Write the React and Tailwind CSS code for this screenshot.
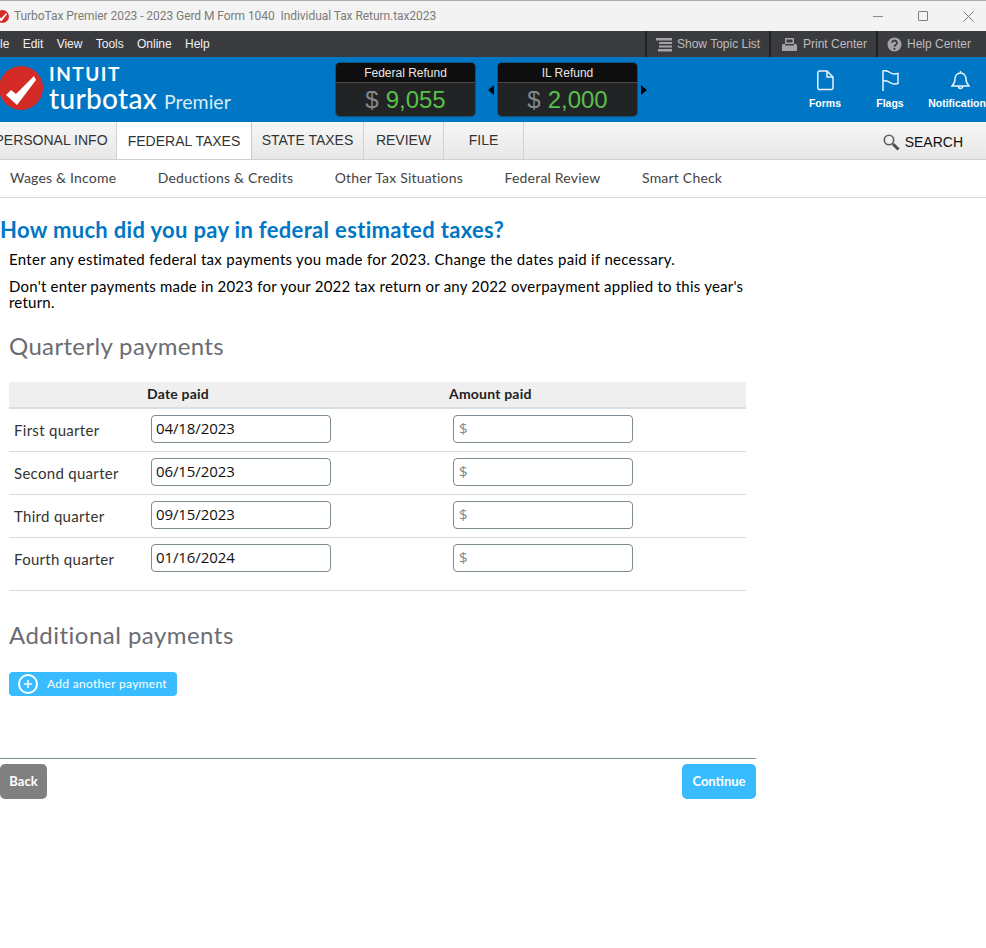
import { Plus } from "lucide-react";

const body = "font-['Lato','Open_Sans',sans-serif]";
const arial = "font-['Liberation_Sans',Arial,sans-serif]";

const quarters = [
  { label: "First quarter", date: "04/18/2023" },
  { label: "Second quarter", date: "06/15/2023" },
  { label: "Third quarter", date: "09/15/2023" },
  { label: "Fourth quarter", date: "01/16/2024" },
];

function CheckLogo({ size }) {
  return (
    <svg width={size} height={size} viewBox="0 0 44 44" className="shrink-0">
      <circle cx="22" cy="22" r="22" fill="#d52b27" />
      <path d="M7 29l5-5 5 4L35 10l2 4-19 25z" fill="#fff" />
    </svg>
  );
}

function TitleBar() {
  return (
    <div className="flex h-[31px] shrink-0 items-center overflow-hidden border-t border-[#a9abb0] bg-[#f3f3f3]">
      <div className="ml-[-4px]">
        <CheckLogo size={13} />
      </div>
      <span className="ml-[5px] font-['Roboto',sans-serif] text-[12px] tracking-[-0.06px] whitespace-pre text-[#7b7b7b]">
        TurboTax Premier 2023 - 2023 Gerd M Form 1040  Individual Tax Return.tax2023
      </span>
      <div className="ml-auto flex items-center">
        <div className="h-px w-[10px] bg-[#8a8a8a]" />
        <div className="ml-[35px] size-[10px] rounded-[1px] border border-[#7a7a7a]" />
        <svg width="11" height="11" viewBox="0 0 11 11" className="mr-[12px] ml-[35px]">
          <path d="M.5.5l10 10M10.5.5l-10 10" stroke="#777" strokeWidth="1" fill="none" />
        </svg>
      </div>
    </div>
  );
}

function MenuBar() {
  return (
    <div className={`flex h-[26px] shrink-0 items-center overflow-hidden bg-[#3a3b3f] text-[12px] ${arial}`}>
      <div className="ml-[-10px] flex gap-[13.300px] text-[#f1f1f1]">
        <span>File</span>
        <span>Edit</span>
        <span>View</span>
        <span>Tools</span>
        <span>Online</span>
        <span>Help</span>
      </div>
      <div className="ml-auto flex h-full text-[#bdbdbd]">
        <div className="flex w-[126px] items-center gap-[5px] border-x-2 border-[#1f2023] pl-[9px]">
          <svg width="16" height="15" viewBox="0 0 16 15">
            <path d="M0 1h16v2.500H0zM3 5h13v2H3zM3 8.500h13v2H3zM2 12h14v2.500H2z" fill="#a5a5a5" />
          </svg>
          <span>Show Topic List</span>
        </div>
        <div className="flex w-[107px] items-center gap-[5px] border-r-2 border-[#1f2023] pl-[10px]">
          <svg width="17" height="15" viewBox="0 0 17 15">
            <path d="M4 1h9v6H4zM5.500 2.500v3h6v-3z" fill="#a5a5a5" fillRule="evenodd" />
            <path d="M2.500 7H4v1.500h9V7h1.500A1.500 1.500 0 0 1 16 8.500V14H1V8.500A1.500 1.500 0 0 1 2.500 7z" fill="#a5a5a5" />
          </svg>
          <span>Print Center</span>
        </div>
        <div className="flex w-[108px] items-center gap-[5px] pl-[9px]">
          <svg width="15" height="15" viewBox="0 0 15 15" className="shrink-0">
            <circle cx="7.500" cy="7.500" r="7" fill="#a5a5a5" />
            <path d="M5 5.800a2.500 2.300 0 1 1 3.800 2c-.9.500-1.300 1-1.300 1.900" fill="none" stroke="#3a3b3f" strokeWidth="1.800" />
            <circle cx="7.500" cy="11.800" r="1.100" fill="#3a3b3f" />
          </svg>
          <span>Help Center</span>
        </div>
      </div>
    </div>
  );
}

function RefundBox({ title, amount }) {
  return (
    <div className={`w-[141px] overflow-hidden rounded-[5px] border border-[#14507f] bg-[#222324] ${arial}`}>
      <div className="flex h-[20px] items-center justify-center border-b border-[#4a4a4a] bg-[#0e0e0e] pt-[1px] text-[12px] text-[#e6e6e6]">
        {title}
      </div>
      <div className="flex h-[33px] items-center justify-center gap-[7px] text-[24px]">
        <span className="text-[#808890]">$</span>
        <span className="text-[#57c04a]">{amount}</span>
      </div>
    </div>
  );
}

function Arrow({ dir }) {
  return (
    <svg width="6" height="10" viewBox="0 0 6 10" className="shrink-0">
      <path d={dir === "left" ? "M6 0v10L0 5z" : "M0 0v10l6-5z"} fill="#060606" />
    </svg>
  );
}

function BlueBar() {
  return (
    <div className="flex h-[65px] shrink-0 items-center overflow-hidden bg-[#0077c5] text-white">
      <div className="ml-[-1px] flex w-[336px] items-start self-start pt-[9px]">
        <CheckLogo size={44} />
        <div className={`ml-[6px] flex flex-col ${body}`}>
          <span className="mt-[-1px] h-[18px] text-[19px] leading-[18px] font-bold tracking-[1.5px]">INTUIT</span>
          <div className="mt-[1px] flex h-[28px] items-baseline">
            <span className="text-[28px] leading-[28px] font-medium tracking-[0.3px]">turbotax</span>
            <span className="ml-[7px] text-[19.500px] leading-[28px] text-[#d8ecf8]">Premier</span>
          </div>
        </div>
      </div>
      <RefundBox title="Federal Refund" amount="9,055" />
      <div className="mr-[3px] ml-[12px] flex">
        <Arrow dir="left" />
      </div>
      <RefundBox title="IL Refund" amount="2,000" />
      <div className="ml-[3px] flex">
        <Arrow dir="right" />
      </div>
      <div className={`mr-[-4px] ml-auto flex h-full text-[10.500px] font-bold ${arial}`}>
        <div className="flex w-[56px] flex-col items-center pt-[13px]">
          <svg width="17" height="21" viewBox="0 0 17 21" fill="none" stroke="#e8f3fb" strokeWidth="1.500">
            <path d="M2.500 1h7.500l6 6v10.500a2 2 0 0 1-2 2H2.500a1.700 1.700 0 0 1-1.700-2V3a2 2 0 0 1 1.700-2z" />
            <path d="M10 1v6h6" />
          </svg>
          <span className="mt-[5px]">Forms</span>
        </div>
        <div className="ml-[9px] flex w-[56px] flex-col items-center pt-[13px]">
          <svg width="17" height="21" viewBox="0 0 17 21" fill="none" stroke="#e8f3fb" strokeWidth="1.500">
            <path d="M1 21V1c3-1 5 0 7 1.500s4 2 8 1v10c-4 1-6 .5-8-1S4 10 1 11" />
          </svg>
          <span className="mt-[5px]">Flags</span>
        </div>
        <div className="ml-[12px] flex w-[60px] flex-col items-center pt-[13px] whitespace-nowrap">
          <svg width="19" height="21" viewBox="0 0 19 21" fill="none" stroke="#e8f3fb" strokeWidth="1.500">
            <path d="M1 16h17c-2-2-3-3-3-7 0-3-2-6-5.500-6S4 6 4 9c0 4-1 5-3 7zM9.500 1v2M7.500 16.500a2 2 0 1 0 4 0" />
          </svg>
          <span className="mt-[5px]">Notifications</span>
        </div>
      </div>
    </div>
  );
}

function TabBar() {
  const tab = "flex h-full items-center justify-center border-r border-[#d2d2d2]";
  return (
    <div className={`flex h-[38px] shrink-0 items-stretch overflow-hidden border-b border-[#cfcfcf] bg-gradient-to-b from-[#f7f7f7] to-[#e7e7e7] text-[14px] text-[#333] ${arial}`}>
      <div className={`${tab} ml-[-14px] w-[131px]`}>PERSONAL INFO</div>
      <div className="mb-[-1px] flex h-[38px] w-[135px] items-center justify-center border-r border-[#c9c9c9] bg-white text-[#333]">
        FEDERAL TAXES
      </div>
      <div className={`${tab} w-[112px]`}>STATE TAXES</div>
      <div className={`${tab} w-[80px]`}>REVIEW</div>
      <div className={`${tab} w-[80px]`}>FILE</div>
      <div className="ml-auto flex items-center gap-[5px] pt-[3px] pr-[23px] text-[#111]">
        <svg width="17" height="17" viewBox="0 0 17 17" fill="none">
          <circle cx="6" cy="6" r="4.700" stroke="#5c6066" strokeWidth="1.600" />
          <path d="M10 10l5.500 5.500" stroke="#4a4d52" strokeWidth="3" />
        </svg>
        <span>SEARCH</span>
      </div>
    </div>
  );
}

function SubNav() {
  return (
    <div className={`flex h-[38px] shrink-0 items-center gap-[41.500px] border-b border-[#d8d8d8] pb-[2px] pl-[10px] text-[14px] tracking-[0.2px] text-[#444] ${body}`}>
      <span>Wages &amp; Income</span>
      <span>Deductions &amp; Credits</span>
      <span>Other Tax Situations</span>
      <span>Federal Review</span>
      <span>Smart Check</span>
    </div>
  );
}

function Field({ value, prefix }) {
  return (
    <div className="flex h-[28px] w-[180px] items-center rounded-[4px] border border-[#7d8b93] bg-white pb-[1px] pl-[4px] font-['Open_Sans',sans-serif] text-[15px] tracking-[-0.1px]">
      {prefix && <span className="pl-[1px] text-[#7e8a92]">{prefix}</span>}
      {value && <span className="text-[#111]">{value}</span>}
    </div>
  );
}

function QuarterTable() {
  return (
    <div className="ml-[9px] w-[737px]">
      <div className="flex h-[27px] items-center border-b-2 border-[#d8dfe3] bg-[#efefef] pb-[3px] text-[14px] font-bold tracking-[0.2px] text-[#222]">
        <span className="ml-[138px] w-[302px]">Date paid</span>
        <span>Amount paid</span>
      </div>
      {quarters.map((q, i) => (
        <div key={q.date} className={`flex items-start border-b border-[#d5dde2] pt-[6px] ${i === 3 ? "h-[53px]" : "h-[43px]"}`}>
          <span className="mt-[1px] w-[142px] pl-[5px] text-[15px] leading-[28px] tracking-[0.3px] text-[#333]">{q.label}</span>
          <Field value={q.date} />
          <div className="w-[122px]" />
          <Field prefix="$" />
        </div>
      ))}
    </div>
  );
}

export default function App() {
  return (
    <div className="flex h-[948px] w-[986px] flex-col overflow-hidden bg-white">
      <TitleBar />
      <MenuBar />
      <BlueBar />
      <TabBar />
      <SubNav />
      <main className={`flex-1 text-black ${body}`}>
        <h1 className="mt-[18px] text-[22px] leading-[28px] font-bold tracking-[0.33px] text-[#0077c5]">
          How much did you pay in federal estimated taxes?
        </h1>
        <p className="mt-[6px] ml-[9px] text-[15px] leading-[18px] tracking-[0.29px]">
          Enter any estimated federal tax payments you made for 2023. Change the dates paid if necessary.
        </p>
        <p className="mt-[10px] ml-[9px] w-[745px] text-[15px] leading-[16px] tracking-[0.22px]">
          Don't enter payments made in 2023 for your 2022 tax return or any 2022 overpayment applied to this year's return.
        </p>
        <h2 className="mt-[20px] ml-[9px] text-[24px] leading-[32px] tracking-[0.35px] text-[#6b6c72]">Quarterly payments</h2>
        <div className="mt-[20px]">
          <QuarterTable />
        </div>
        <h2 className="mt-[28px] ml-[9px] text-[24px] leading-[32px] tracking-[0.47px] text-[#6b6c72]">Additional payments</h2>
        <button className="mt-[21px] ml-[9px] flex h-[24px] w-[168px] items-center rounded-[4px] bg-[#38bcff] pl-[9px] text-[12px] text-white">
          <span className="flex size-[20px] items-center justify-center rounded-full border-2 border-white">
            <Plus size={12} strokeWidth={3} />
          </span>
          <span className="ml-[9px] tracking-[0.3px]">Add another payment</span>
        </button>
        <div className="mt-[62px] flex w-[756px] items-start justify-between border-t border-[#7e8d95] pt-[5px]">
          <button className="h-[35px] w-[47px] rounded-[5px] bg-[#808080] text-[13px] font-bold text-white">Back</button>
          <button className="h-[35px] w-[74px] rounded-[5px] bg-[#38bcff] text-[13px] font-bold text-white">Continue</button>
        </div>
      </main>
    </div>
  );
}
